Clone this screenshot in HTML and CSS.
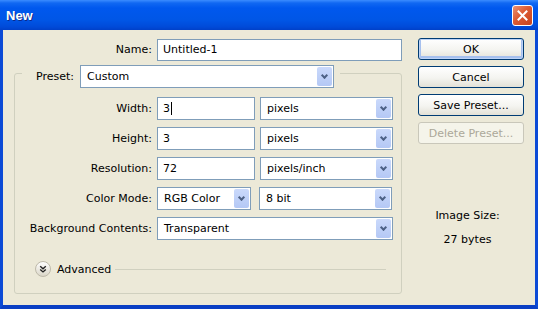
FILE: index.html
```html
<!DOCTYPE html>
<html lang="en">
<head>
    <meta charset="UTF-8">
    <meta name="viewport" content="width=device-width, initial-scale=1.0">
    <title>New</title>
    <link rel="stylesheet" href="styles.css">
</head>
<body>
    <div class="window">
        <div class="titlebar">
            <span class="title">New</span>
            <div class="close">
                <svg width="19" height="19" viewBox="0 0 19 19"><path d="M5.5 5.5l8 8M13.5 5.5l-8 8" stroke="#fff" stroke-width="2" stroke-linecap="square"/></svg>
            </div>
        </div>

        <div class="client">
            <div class="form">
                <div class="row">
                    <label class="lbl lbl-name">Name:</label>
                    <div class="field name">Untitled-1</div>
                </div>

                <div class="group">
                    <div class="group-head">
                        <label>Preset:</label>
                        <div class="select preset"><span>Custom</span><i class="arrow"></i></div>
                    </div>

                    <div class="row first">
                        <label class="lbl">Width:</label>
                        <div class="field num">3<span class="caret"></span></div>
                        <div class="select unit"><span>pixels</span><i class="arrow"></i></div>
                    </div>
                    <div class="row">
                        <label class="lbl">Height:</label>
                        <div class="field num">3</div>
                        <div class="select unit"><span>pixels</span><i class="arrow"></i></div>
                    </div>
                    <div class="row">
                        <label class="lbl">Resolution:</label>
                        <div class="field num">72</div>
                        <div class="select unit"><span>pixels/inch</span><i class="arrow"></i></div>
                    </div>
                    <div class="row">
                        <label class="lbl">Color Mode:</label>
                        <div class="select mode"><span>RGB Color</span><i class="arrow"></i></div>
                        <div class="select unit bits"><span>8 bit</span><i class="arrow"></i></div>
                    </div>
                    <div class="row">
                        <label class="lbl">Background Contents:</label>
                        <div class="select bg"><span>Transparent</span><i class="arrow"></i></div>
                    </div>

                    <div class="advanced">
                        <svg width="16" height="16" viewBox="0 0 16 16">
                            <defs>
                                <linearGradient id="adv" x1="0" y1="0" x2="0" y2="1">
                                    <stop offset="0" stop-color="#ffffff"/>
                                    <stop offset="1" stop-color="#d9d5c6"/>
                                </linearGradient>
                            </defs>
                            <circle cx="8" cy="8" r="7.5" fill="url(#adv)" stroke="#bdb9a9"/>
                            <path d="M5.2 5.2l2.8 2.5 2.8-2.5M5.2 8.4l2.8 2.5 2.8-2.5" stroke="#222" stroke-width="1.4" fill="none"/>
                        </svg>
                        <span>Advanced</span>
                        <span class="rule"></span>
                    </div>
                </div>
            </div>

            <div class="side">
                <div class="btn default">OK</div>
                <div class="btn">Cancel</div>
                <div class="btn">Save Preset...</div>
                <div class="btn disabled">Delete Preset...</div>
                <div class="info">
                    <p>Image Size:</p>
                    <p>27 bytes</p>
                </div>
            </div>
        </div>
    </div>
</body>
</html>
```

FILE: styles.css
```css
html, body {
    margin: 0;
    background-color: #ece9d8;
}
body {
    font-family: "DejaVu Sans", sans-serif;
    font-size: 11px;
    color: #000;
}
.window {
    width: 538px;
    height: 309px;
    box-sizing: border-box;
    display: flex;
    flex-direction: column;
    border-left: 3px solid #0b4ad6;
    border-right: 3px solid #0b4ad6;
    border-bottom: 4px solid #0a3fc4;
}

/* title bar */
.titlebar {
    height: 30px;
    margin: 0 -3px;
    padding: 0 5px 0 6px;
    display: flex;
    align-items: center;
    justify-content: space-between;
    background: linear-gradient(#3b8cff 0, #1168f2 3px, #0058ee 8px, #0056e6 20px, #004ad8 27px, #0040c8 30px);
}
.title {
    font-family: "Liberation Sans", Arial, sans-serif;
    font-weight: bold;
    font-size: 13px;
    color: #fff;
    text-shadow: 1px 1px 0 #0c2a8c;
    margin-top: 1px;
}
.close {
    width: 19px;
    height: 19px;
    border: 1px solid #fff;
    border-radius: 3px;
    background: linear-gradient(135deg, #eb9273 0%, #dc5a33 45%, #c8431d 100%);
    margin-top: 1px;
}
.close svg { display: block; }

/* client area */
.client {
    flex: 1;
    display: flex;
    gap: 16px;
    padding: 8px 11px 0 11px;
}
.form { width: 388px; }
.row {
    display: flex;
    align-items: center;
    gap: 5px;
    height: 23px;
}
.row + .row { margin-top: 7px; }
.row.first { margin-top: 9px; }
.lbl {
    width: 137px;
    text-align: right;
    white-space: nowrap;
}
.lbl-name { width: 138px; }

.field, .select {
    height: 23px;
    box-sizing: border-box;
    border: 1px solid #7f9db9;
    background-color: #fff;
    display: flex;
    align-items: center;
    white-space: nowrap;
}
.field { padding-left: 5px; }
.field.name { width: 245px; height: 22px; }
.field.num { width: 98px; }
.caret {
    display: inline-block;
    width: 1px;
    height: 13px;
    margin-left: 1px;
    background-color: #000;
}
.select { padding: 1px; }
.select span {
    flex: 1;
    padding-left: 5px;
}
.select .arrow {
    width: 15px;
    align-self: stretch;
    border-radius: 2px;
    background: linear-gradient(#cad9fb, #b4c8f5);
    display: flex;
    align-items: center;
    justify-content: center;
}
.select .arrow::after {
    content: "";
    width: 3px;
    height: 3px;
    border-right: 2px solid #4d6185;
    border-bottom: 2px solid #4d6185;
    transform: rotate(45deg);
    margin-top: -3px;
}
.select.preset { width: 254px; }
.select.unit { width: 133px; }
.select.mode { width: 94px; }
.select.bits { margin-left: 3px; }
.select.bg { width: 236px; }

/* preset group box */
.group {
    margin-top: 12px;
    border: 1px solid #d0d0bf;
    border-radius: 3px;
    padding-bottom: 16px;
}
.group-head {
    display: flex;
    align-items: center;
    gap: 6px;
    width: fit-content;
    margin: -9px 0 0 7px;
    padding: 0 6px 0 14px;
    background-color: #ece9d8;
}
.advanced {
    display: flex;
    align-items: center;
    gap: 6px;
    height: 16px;
    margin: 21px 15px 0 20px;
}
.advanced svg { display: block; }
.rule {
    flex: 1;
    height: 1px;
    margin-left: -2px;
    background-color: #d0d0bf;
}

/* buttons */
.side { width: 106px; }
.btn {
    height: 22px;
    box-sizing: border-box;
    border: 1px solid #003c74;
    border-radius: 3px;
    background: linear-gradient(#ffffff, #f4f4f0 55%, #e3e1d7);
    display: flex;
    align-items: center;
    justify-content: center;
}
.btn + .btn { margin-top: 6px; }
.btn.default { box-shadow: inset 0 0 0 1px #bcd2f6, inset 0 -1px 0 2px #a6c0ee; }
.btn.disabled {
    border-color: #c9c7ba;
    background: #f5f4ea;
    color: #aca899;
}
.info {
    margin-top: 60px;
    padding-right: 7px;
    text-align: center;
}
.info p {
    margin: 0;
    line-height: 24px;
}
```
